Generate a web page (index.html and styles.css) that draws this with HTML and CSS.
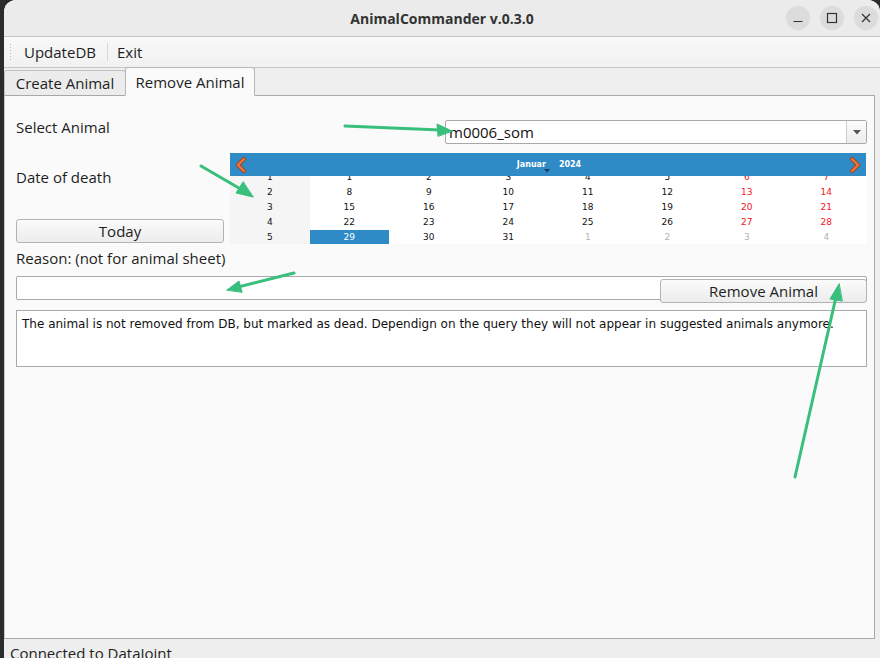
FILE: index.html
```html
<!DOCTYPE html>
<html>
<head>
<meta charset="utf-8">
<link rel="stylesheet" href="styles.css">
</head>
<body>
<div class="desk"></div>
<div class="window">
  <div class="titlebar">
    <div class="title">AnimalCommander v.0.3.0</div>
    <div class="wbtns">
      <span class="wbtn"><svg width="24" height="24" viewBox="0 0 24 24"><line x1="7.5" y1="15.5" x2="16.5" y2="15.5" stroke="#333" stroke-width="1.2"/></svg></span>
      <span class="wbtn"><svg width="24" height="24" viewBox="0 0 24 24"><rect x="7.5" y="7.5" width="9" height="9" fill="none" stroke="#333" stroke-width="1.2"/></svg></span>
      <span class="wbtn"><svg width="24" height="24" viewBox="0 0 24 24"><path d="M8 8 L16 16 M16 8 L8 16" stroke="#333" stroke-width="1.2"/></svg></span>
    </div>
  </div>
  <div class="menubar">
    <span class="grip"></span>
    <span class="mitem first">UpdateDB</span>
    <span class="msep"></span>
    <span class="mitem">Exit</span>
  </div>
  <div class="tabs">
    <div class="tab">Create Animal</div>
    <div class="tab active">Remove Animal</div>
  </div>
  <div class="pane">
    <div class="row-select">
      <div class="label">Select Animal</div>
      <div class="combo">
        <span class="combo-text">m0006_som</span>
        <span class="combo-arrow"><svg width="8" height="5" viewBox="0 0 8 5"><path d="M0 0 H8 L4 4.5 Z" fill="#555"/></svg></span>
      </div>
    </div>
    <div class="row-date">
      <div class="leftcol">
        <div class="label date-label">Date of death</div>
        <div class="button today">Today</div>
      </div>
      <div class="calendar">
        <div class="calnav">
          <svg class="navarrow" width="12" height="16" viewBox="0 0 12 16"><path d="M9 2 L3 8 L9 14" fill="none" stroke="#a8431c" stroke-width="4" stroke-linecap="round" stroke-linejoin="round"/><path d="M9 2 L3 8 L9 14" fill="none" stroke="#ee7a3a" stroke-width="2" stroke-linecap="round" stroke-linejoin="round"/></svg>
          <div class="monthyear">
            <span class="month">Januar<svg class="mdrop" width="6" height="4" viewBox="0 0 6 4"><path d="M0 0 H6 L3 3.5 Z" fill="#1d3c5c"/></svg></span>
            <span class="year">2024</span>
          </div>
          <svg class="navarrow" width="12" height="16" viewBox="0 0 12 16"><path d="M3 2 L9 8 L3 14" fill="none" stroke="#a8431c" stroke-width="4" stroke-linecap="round" stroke-linejoin="round"/><path d="M3 2 L9 8 L3 14" fill="none" stroke="#ee7a3a" stroke-width="2" stroke-linecap="round" stroke-linejoin="round"/></svg>
        </div>
        <div class="calgrid-wrap">
          <div class="calgrid">
            <span class="wk">1</span><span>1</span><span>2</span><span>3</span><span>4</span><span>5</span><span class="we">6</span><span class="we">7</span>
            <span class="wk">2</span><span>8</span><span>9</span><span>10</span><span>11</span><span>12</span><span class="we">13</span><span class="we">14</span>
            <span class="wk">3</span><span>15</span><span>16</span><span>17</span><span>18</span><span>19</span><span class="we">20</span><span class="we">21</span>
            <span class="wk">4</span><span>22</span><span>23</span><span>24</span><span>25</span><span>26</span><span class="we">27</span><span class="we">28</span>
            <span class="wk">5</span><span class="sel">29</span><span>30</span><span>31</span><span class="om">1</span><span class="om">2</span><span class="om">3</span><span class="om">4</span>
          </div>
        </div>
      </div>
    </div>
    <div class="label reason-label">Reason: (not for animal sheet)</div>
    <div class="reason-row">
      <div class="lineedit"></div>
      <div class="button remove">Remove Animal</div>
    </div>
    <div class="textbox">The animal is not removed from DB, but marked as dead. Dependign on the query they will not appear in suggested animals anymore.</div>
  </div>
  <div class="status">Connected to DataJoint</div>
</div>
<svg class="annot" width="880" height="658" viewBox="0 0 880 658">
  <g stroke="#38bf7c" stroke-width="3" stroke-linecap="round" fill="#38bf7c">
    <line x1="345" y1="126" x2="440" y2="130"/>
    <path d="M452 131 L437 124 L438 136 Z" stroke-width="1"/>
    <line x1="201" y1="166" x2="244" y2="191"/>
    <path d="M253 197 L236 193 L243 182 Z" stroke-width="1"/>
    <line x1="294" y1="273" x2="238" y2="287"/>
    <path d="M227 290 L239 281 L242 292 Z" stroke-width="1"/>
    <line x1="795" y1="477" x2="836" y2="297"/>
    <path d="M839 284 L830 299 L842 301 Z" stroke-width="1"/>
  </g>
</svg>
</body>
</html>
```
FILE: styles.css
```css
html, body {
  margin: 0;
  padding: 0;
  width: 880px;
  height: 658px;
  overflow: hidden;
  background: #2a2a2a;
  font-family: "Open Sans", "Noto Sans", sans-serif;
  color: #1e1e1e;
}
.desk {
  position: absolute;
  left: 0; top: 0;
  width: 4px; height: 658px;
  background: #2b2b2b;
}
.window {
  margin-left: 4px;
  width: 876px;
  height: 658px;
  background: #efefef;
  border-top-left-radius: 12px;
  border-top-right-radius: 12px;
  display: flex;
  flex-direction: column;
  overflow: hidden;
}
.titlebar {
  height: 36px;
  flex: none;
  background: #ebebeb;
  border-bottom: 1px solid #c3c3c3;
  position: relative;
  display: flex;
  align-items: center;
  justify-content: flex-end;
}
.title {
  position: absolute;
  left: 0; right: 0; top: 0;
  line-height: 37px;
  text-align: center;
  font-weight: bold;
  font-size: 14px;
  color: #333;
}
.wbtns {
  display: flex;
  gap: 10px;
  margin-right: 2px;
  position: relative;
}
.wbtn {
  width: 24px; height: 24px;
  border-radius: 50%;
  background: #dcdcdc;
  display: block;
}
.wbtn svg { display: block; }
.menubar {
  height: 30px;
  flex: none;
  background: linear-gradient(#f8f8f8, #f1f1f1);
  border-bottom: 1px solid #c6c6c6;
  display: flex;
  align-items: center;
  font-size: 15px;
  color: #1e1e1e;
  white-space: nowrap;
}
.grip {
  width: 4px;
  height: 18px;
  margin-left: 5px;
  background-image: radial-gradient(circle, #b9b9b9 0.7px, transparent 0.8px);
  background-size: 3px 3px;
}
.mitem.first { margin-left: 11px; }
.msep {
  width: 1px; height: 18px;
  background: #d8d8d8;
  margin: 0 9px 0 11px;
}
.tabs {
  height: 28px;
  flex: none;
  display: flex;
  align-items: flex-end;
  font-size: 15px;
  position: relative;
  z-index: 1;
  margin-bottom: -1px;
  white-space: nowrap;
}
.tab {
  line-height: 25px;
  width: 122px;
  box-sizing: border-box;
  height: 26px;
  background: #ececec;
  border: 1px solid #c0c0c0;
  border-bottom: 1px solid #a8a8a8;
  border-radius: 3px 3px 0 0;
  text-align: center;
}
.tab.active {
  height: 29px;
  line-height: 28px;
  width: 130px;
  background: #fafafa;
  border-color: #b8b8b8;
  border-bottom-color: #fafafa;
  margin-left: -1px;
}
.pane {
  flex: 1;
  background: #fafafa;
  border: 1px solid #a8a8a8;
  border-left-color: #c8c8c8;
  margin-right: 5px;
  padding: 24px 7px 0 11px;
  display: flex;
  flex-direction: column;
  font-size: 15px;
}
.label { color: #1e1e1e; line-height: 20px; white-space: nowrap; }
.row-select {
  display: flex;
  align-items: center;
  height: 24px;
}
.row-select .label { flex: 1; margin-top: -11px; }
.combo {
  width: 420px;
  height: 22px;
  border: 1px solid #a9a9a9;
  border-radius: 2px;
  background: #fff;
  display: flex;
  align-items: center;
}
.combo-text { flex: 1; padding-left: 3px; font-size: 15px; color: #111; }
.combo-arrow {
  width: 19px; height: 22px;
  border-left: 1px solid #cfcfcf;
  background: linear-gradient(#fdfdfd, #ececec);
  display: flex; align-items: center; justify-content: center;
}
.row-date {
  display: flex;
  margin-top: 9px;
  height: 91px;
}
.leftcol {
  width: 208px;
  margin-right: 6px;
  display: flex;
  flex-direction: column;
}
.date-label { margin-top: 14px; }
.button {
  height: 22px;
  border: 1px solid #b3b3b3;
  border-radius: 3px;
  background: linear-gradient(#fbfbfb, #ececec);
  text-align: center;
  line-height: 22px;
  font-size: 15px;
  color: #1e1e1e;
  white-space: nowrap;
}
.today { margin-top: auto; margin-bottom: 1px; }
.calendar {
  width: 636px;
  display: flex;
  flex-direction: column;
  font-family: "DejaVu Sans", sans-serif;
}
.calnav {
  height: 23px;
  background: #2e8bc6;
  display: flex;
  align-items: center;
  justify-content: space-between;
  padding: 0 5px;
}
.navarrow { display: block; }
.monthyear {
  color: #fff;
  font-weight: bold;
  font-size: 8px;
  display: flex;
  gap: 13px;
  margin-left: 2px;
  margin-top: -1px;
}
.month { position: relative; }
.mdrop { position: absolute; right: -4px; bottom: -4px; }
.calgrid-wrap {
  height: 68px;
  overflow: hidden;
  background: #fff;
}
.calgrid {
  margin-top: -6px;
  display: grid;
  grid-template-columns: repeat(8, 1fr);
  grid-auto-rows: 15px;
  font-size: 9px;
}
.calgrid span {
  text-align: center;
  line-height: 15px;
  color: #111;
  background: #fff;
}
.calgrid span.wk { background: #f5f5f5; }
.calgrid span.we { color: #f0141e; }
.calgrid span.om { color: #b4b4b4; }
.calgrid span.sel { background: #2e8bc6; color: #fff; }
.reason-label { margin-top: 4px; }
.reason-row {
  position: relative;
  margin-top: 8px;
  height: 24px;
}
.lineedit {
  height: 22px;
  border: 1px solid #a9a9a9;
  border-radius: 2px;
  background: #fff;
}
.remove {
  position: absolute;
  right: 0;
  top: 3px;
  width: 205px;
}
.textbox {
  margin-top: 10px;
  height: 45px;
  border: 1px solid #a9a9a9;
  background: #fff;
  font-family: "DejaVu Sans", sans-serif;
  font-size: 12px;
  line-height: 14px;
  padding: 6px 5px 4px;
  color: #111;
}
.status {
  height: 19px;
  flex: none;
  background: #eeeeee;
  font-size: 15px;
  padding-left: 6px;
  line-height: 28px;
  overflow: hidden;
  white-space: nowrap;
}
.annot {
  position: absolute;
  left: 0; top: 0;
  pointer-events: none;
}
```
